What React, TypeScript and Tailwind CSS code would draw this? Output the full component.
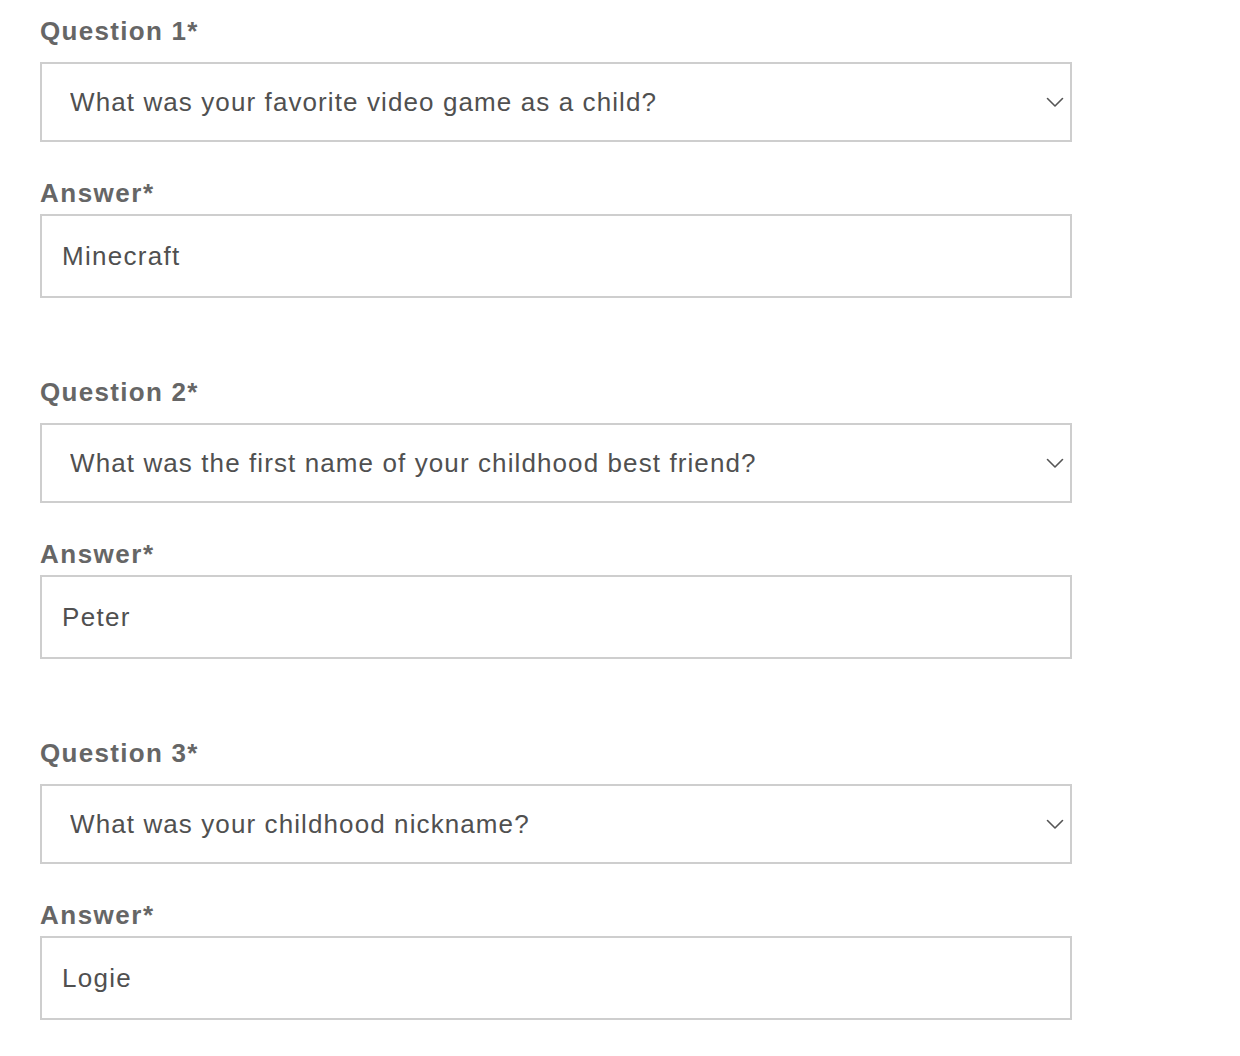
import { useState } from "react"

const questions = [
  {
    label: "Question 1*",
    options: [
      "What was your favorite video game as a child?",
      "What was the first name of your childhood best friend?",
      "What was your childhood nickname?",
    ],
    answer: "Minecraft",
  },
  {
    label: "Question 2*",
    options: [
      "What was the first name of your childhood best friend?",
      "What was your favorite video game as a child?",
      "What was your childhood nickname?",
    ],
    answer: "Peter",
  },
  {
    label: "Question 3*",
    options: [
      "What was your childhood nickname?",
      "What was your favorite video game as a child?",
      "What was the first name of your childhood best friend?",
    ],
    answer: "Logie",
  },
]

function Chevron() {
  return (
    <svg
      className="pointer-events-none absolute right-[8px] top-1/2 -translate-y-1/2"
      width="18"
      height="12"
      viewBox="0 0 18 12"
      fill="none"
    >
      <path
        d="M1.5 2.5 L9 10 L16.5 2.5"
        stroke="#555"
        strokeWidth="1.6"
        strokeLinecap="round"
        strokeLinejoin="round"
      />
    </svg>
  )
}

function QuestionGroup({
  label,
  options,
  answer,
}: {
  label: string
  options: string[]
  answer: string
}) {
  const [value, setValue] = useState(answer)

  return (
    <div className="flex flex-col">
      <label className="h-[30px] text-[26px] leading-[30px] font-bold tracking-[1.3px] text-[#666]">
        {label}
      </label>
      <div className="relative mt-4">
        <select className="h-[80px] w-full appearance-none border-2 border-[#cecece] bg-white pl-[28px] pr-12 text-[26px] tracking-[1.1px] text-[#505050] outline-none">
          {options.map((o) => (
            <option key={o}>{o}</option>
          ))}
        </select>
        <Chevron />
      </div>
      <label className="mt-9 h-[30px] text-[26px] leading-[30px] font-bold tracking-[1.5px] text-[#666]">
        Answer*
      </label>
      <input
        className="mt-[6px] h-[84px] w-full border-2 border-[#cecece] bg-white px-5 text-[26px] tracking-[1.3px] text-[#505050] outline-none"
        value={value}
        onChange={(e) => setValue(e.target.value)}
      />
    </div>
  )
}

export default function App() {
  return (
    <div className="min-h-[1056px] bg-white pt-4 pl-10 font-['Liberation_Sans',Arial,sans-serif]">
      <div className="flex w-[1032px] flex-col gap-[79px]">
        {questions.map((q) => (
          <QuestionGroup key={q.label} {...q} />
        ))}
      </div>
    </div>
  )
}
